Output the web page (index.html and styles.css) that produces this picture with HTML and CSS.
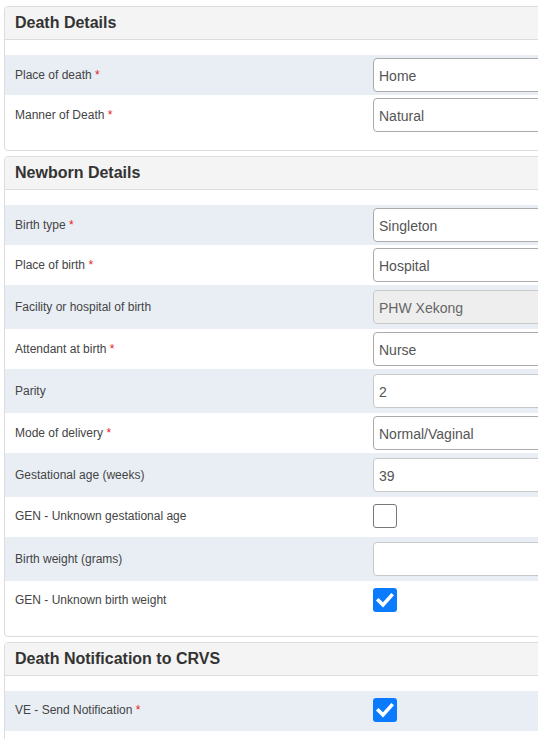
FILE: index.html
```html
<!DOCTYPE html>
<html>
<head>
<meta charset="utf-8">
<link rel="stylesheet" href="styles.css">
</head>
<body>
<div class="page">
  <section class="card">
    <div class="card-header"><h2>Death Details</h2></div>
    <div class="card-body">
      <div class="row shaded sel"><span class="label">Place of death <i>*</i></span><div class="field"><div class="control select">Home</div></div></div>
      <div class="row sel"><span class="label">Manner of Death <i>*</i></span><div class="field"><div class="control select">Natural</div></div></div>
    </div>
  </section>

  <section class="card">
    <div class="card-header"><h2>Newborn Details</h2></div>
    <div class="card-body">
      <div class="row shaded sel"><span class="label">Birth type <i>*</i></span><div class="field"><div class="control select">Singleton</div></div></div>
      <div class="row sel"><span class="label">Place of birth <i>*</i></span><div class="field"><div class="control select">Hospital</div></div></div>
      <div class="row shaded txt"><span class="label">Facility or hospital of birth</span><div class="field"><div class="control input disabled">PHW Xekong</div></div></div>
      <div class="row sel"><span class="label">Attendant at birth <i>*</i></span><div class="field"><div class="control select">Nurse</div></div></div>
      <div class="row shaded txt"><span class="label">Parity</span><div class="field"><div class="control input">2</div></div></div>
      <div class="row sel"><span class="label">Mode of delivery <i>*</i></span><div class="field"><div class="control select">Normal/Vaginal</div></div></div>
      <div class="row shaded txt"><span class="label">Gestational age (weeks)</span><div class="field"><div class="control input">39</div></div></div>
      <div class="row chk"><span class="label">GEN - Unknown gestational age</span><div class="field"><span class="checkbox"></span></div></div>
      <div class="row shaded txt"><span class="label">Birth weight (grams)</span><div class="field"><div class="control input"></div></div></div>
      <div class="row chk"><span class="label">GEN - Unknown birth weight</span><div class="field"><span class="checkbox checked"><svg viewBox="0 0 24 24" width="24" height="24"><path d="M5.5 12.5l4.5 4.5 8.5-9.5" fill="none" stroke="#fff" stroke-width="3.6" stroke-linecap="square" stroke-linejoin="miter"/></svg></span></div></div>
    </div>
  </section>

  <section class="card">
    <div class="card-header"><h2>Death Notification to CRVS</h2></div>
    <div class="card-body">
      <div class="row shaded chk"><span class="label">VE - Send Notification <i>*</i></span><div class="field"><span class="checkbox checked"><svg viewBox="0 0 24 24" width="24" height="24"><path d="M5.5 12.5l4.5 4.5 8.5-9.5" fill="none" stroke="#fff" stroke-width="3.6" stroke-linecap="square" stroke-linejoin="miter"/></svg></span></div></div>
      <div class="row sel"><span class="label"></span><div class="field"></div></div>
    </div>
  </section>
</div>
</body>
</html>
```

FILE: styles.css
```css
html, body {
  margin: 0;
  padding: 0;
  background: #fff;
  overflow: hidden;
}
body {
  font-family: "Liberation Sans", Arial, sans-serif;
  color: #444;
}
.page {
  display: flex;
  flex-direction: column;
  gap: 5px;
  padding: 6px 0 0 4px;
  width: 600px;
}
.card {
  border: 1px solid #dcdcdc;
  border-radius: 4px;
  background: #fff;
  overflow: hidden;
}
.card-header {
  height: 32px;
  background: #f4f4f4;
  border-bottom: 1px solid #dcdcdc;
  display: flex;
  align-items: center;
  padding-left: 10px;
}
.card-header h2 {
  margin: 0;
  font-size: 16px;
  font-weight: bold;
  color: #333;
}
.card-body {
  padding: 15px 0;
}
.row {
  display: flex;
  align-items: center;
}
.row.shaded {
  background: #e9eef5;
}
.row.sel { padding: 3px 0; min-height: 34px; }
.row.txt { padding: 5px 0; }
.row.chk { padding: 7px 0 9px; }
.label {
  width: 358px;
  padding-left: 10px;
  font-size: 12px;
  color: #444;
  flex-shrink: 0;
}
.label i {
  font-style: normal;
  color: #e52222;
}
.field {
  flex: 1;
  display: flex;
}
.control {
  box-sizing: border-box;
  width: 230px;
  height: 34px;
  border-radius: 4px;
  padding: 1px 5px 0;
  display: flex;
  align-items: center;
  font-size: 14px;
  color: #555;
  background: #fff;
}
.control.select {
  border: 1px solid #aaa;
}
.control.input {
  border: 1px solid #c8c8c8;
}
.control.disabled {
  background: #eee;
  color: #666;
}
.checkbox {
  box-sizing: border-box;
  width: 24px;
  height: 24px;
  border: 1px solid #777;
  border-radius: 3px;
  background: #fff;
  display: block;
}
.checkbox.checked {
  border: none;
  background: #0a7bff;
}
.checkbox svg { display: block; }
```
